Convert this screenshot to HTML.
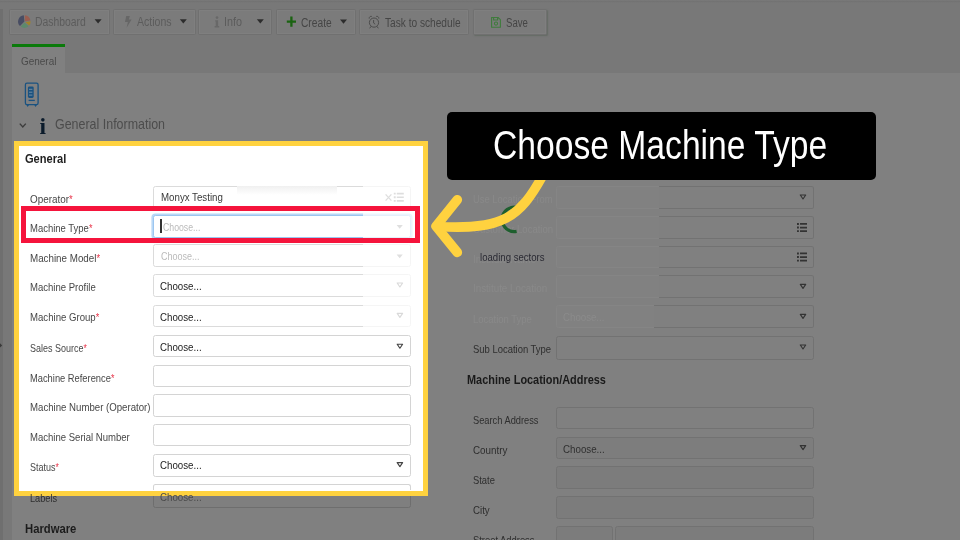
<!DOCTYPE html>
<html lang="en"><head><meta charset="utf-8"><title>Choose Machine Type</title>
<style>
html,body{margin:0;padding:0}
body{width:960px;height:540px;overflow:hidden;position:relative;background:#808080;font-family:"Liberation Sans",sans-serif}
.a{position:absolute;box-sizing:border-box}
.t{position:absolute;white-space:nowrap;transform-origin:0 50%;display:block;filter:blur(.35px)}
.btn{position:absolute;box-sizing:border-box;top:9px;height:26px;background:#7b7b7b;border:1px solid #707070;border-radius:1.5px;box-shadow:inset 0 0 0 1px #7f7f7f}
.in{position:absolute;box-sizing:border-box;left:152.6px;width:258.2px;height:22.6px;border:1px solid #dbdbdb;border-radius:2.5px;background:#fff}
.din{position:absolute;box-sizing:border-box;left:556px;width:257.8px;height:22.5px;border:1px solid #727272;border-radius:2.5px;background:#808080}
.fin{position:absolute;box-sizing:border-box;left:556px;width:257.8px;height:22.5px;border:1px solid #858585;border-radius:2.5px;background:#818181}
.fin i{position:absolute;box-sizing:border-box;left:101.5px;right:-1px;top:-1px;bottom:-1px;border:1px solid #727272;border-left:0;border-radius:0 2.5px 2.5px 0;background:#808080}
svg{position:absolute;overflow:visible}

</style></head>
<body>
<!-- page chrome (dimmed) -->
<div class="a" style="left:0;top:0;width:960px;height:73.4px;background:#787878"></div>
<div class="a" style="left:0;top:0;width:960px;height:3px;background:linear-gradient(#7e7e7e 0,#717171 35%,#787878 100%)"></div>
<div class="a" style="left:0;top:9px;width:3px;height:531px;background:#6f6f6f"></div>
<div class="a" style="left:3px;top:73px;width:9px;height:467px;background:#787878"></div>
<svg style="left:0;top:340px" width="4" height="10" viewBox="0 340 4 10"><path d="M0 343.2 l2.2 2.2 l-2.2 2.2z" fill="#3a3a3a"/></svg>
<!-- toolbar buttons -->
<div class="btn" style="left:9px;width:101px"></div>
<div class="btn" style="left:113px;width:83px"></div>
<div class="btn" style="left:198px;width:74px"></div>
<div class="btn" style="left:276px;width:80px"></div>
<div class="btn" style="left:359px;width:110px"></div>
<div class="btn" style="left:473px;width:74px;box-shadow:inset 0 0 0 1px #7f7f7f,1px 1px 1.5px #646b64"></div>
<!-- toolbar icons -->
<svg style="left:0;top:0" width="560" height="40" viewBox="0 0 560 40">
  <!-- pie -->
  <g transform="translate(24.4 21.6)">
    <path d="M0 0 L-.6 -6.3 A6.3 6.3 0 0 0 -4.4 4.5 Z" fill="#484d63"/>
    <path d="M.5 -.3 L.4 -6.3 A6.3 6.3 0 0 1 6 -1.2 Z" fill="#9a5e50"/>
    <path d="M.9 .4 L6.2 -.3 A6.3 6.3 0 0 1 4.7 4 Z" fill="#a08428"/>
    <path d="M.1 .9 L4.1 4.7 A6.3 6.3 0 0 1 -3.8 5 Z" fill="#5c8a6c"/>
  </g>
  <!-- carets -->
  <g fill="#2c2c2c">
    <path d="M94.6 19.2 h7 l-3.5 4.3z"/>
    <path d="M179.8 19.2 h7 l-3.5 4.3z"/>
    <path d="M256.8 19.2 h7 l-3.5 4.3z"/>
    <path d="M340 19.4 h7 l-3.5 4.3z"/>
  </g>
  <!-- bolt -->
  <path d="M126.2 15.9 h3.6 l-1 3.6 h2.8 l-5 8.2 l1.3 -5.6 h-2.9z" fill="#666"/>
  <!-- info i -->
  <g fill="#686868"><circle cx="217" cy="17.6" r="1.35"/><path d="M215.2 20.2 h2.9 v5.9 h1.1 v1.4 h-4.6 v-1.4 h1.1 v-4.5 h-.5z"/></g>
  <!-- plus -->
  <path d="M286.8 21.6 h9.2 M291.4 16.6 v10.2" stroke="#1a6311" stroke-width="2.3" fill="none"/>
  <!-- alarm clock -->
  <g fill="none" stroke="#4c4c4c" stroke-width="1">
    <circle cx="374" cy="22.6" r="4.6"/>
    <path d="M373.6 20 v3 l1.6 1.2 M369.2 18.6 a2 2 0 0 1 2.6 -2.2 M378.8 18.6 a2 2 0 0 0 -2.6 -2.2 M371 26.4 l-1.3 1.9 M377 26.4 l1.3 1.9"/>
  </g>
  <!-- save -->
  <g fill="none" stroke="#3f7c3c" stroke-width="1.1">
    <path d="M491.6 17.5 h6.6 l2.2 2.2 v7.6 h-8.8z"/>
    <path d="M493.6 17.6 v2.4 h4 v-2.4"/>
    <circle cx="496" cy="23.6" r="1.6"/>
  </g>
</svg>
<!-- tab -->
<div class="a" style="left:12px;top:44px;width:53px;height:30px;background:#808080;border-top:3px solid #0a7a0a"></div>
<!-- vending machine icon + chevron -->
<svg style="left:0;top:76px" width="70" height="64" viewBox="0 76 70 64">
  <g fill="none" stroke="#1a5280" stroke-width="1.3">
    <rect x="25.4" y="83.1" width="12.7" height="21.6" rx="1.6"/>
    <path d="M28.6 100.4 h6.2"/>
  </g>
  <rect x="27.9" y="86.4" width="5.8" height="11.6" rx="1.4" fill="#1a5280"/>
  <path d="M29 89.3 h3.4 M29 92.2 h3.4 M29 95.1 h3.4" stroke="#7d93a6" stroke-width=".9"/>
  <path d="M26.4 105 h2.6 l-1.3 2z M34.3 105 h2.6 l-1.3 2z" fill="#1a5280"/>
  <path d="M19.8 123.6 l3 3.4 l3 -3.4" fill="none" stroke="#3c3c3c" stroke-width="1.4"/>
</svg>

<!-- right column inputs (dimmed) -->
<div class="fin" style="top:186.1px"><i></i></div>
<div class="fin" style="top:216px"><i></i></div>
<div class="fin" style="top:245.6px"><i></i></div>
<div class="fin" style="top:275.3px"><i></i></div>
<div class="fin" style="top:305px"><i style="left:97px"></i></div>
<div class="din" style="top:336px;height:24px"></div>
<div class="din" style="top:407.4px;height:22px"></div>
<div class="din" style="top:436.7px;background:#7d7d7d"></div>
<div class="din" style="top:466.4px;background:#7c7c7c"></div>
<div class="din" style="top:496.1px;background:#7c7c7c"></div>
<div class="din" style="top:526.2px;width:57.3px;background:#7c7c7c"></div>
<div class="din" style="left:615px;top:526.2px;width:198.8px;background:#7c7c7c"></div>
<!-- right column icons -->
<svg style="left:790px;top:180px" width="30" height="290" viewBox="790 180 30 290">
  <g fill="none" stroke="#333" stroke-width="1.15" stroke-linejoin="round">
    <path d="M800.3 195 h5.4 l-2.7 4z"/>
    <path d="M800.3 284.4 h5.4 l-2.7 4z"/>
    <path d="M800.3 314.4 h5.4 l-2.7 4z"/>
    <path d="M800.3 345 h5.4 l-2.7 4z"/>
    <path d="M800.3 445.6 h5.4 l-2.7 4z"/>
  </g>
  <g fill="#333">
    <path d="M797 223 h1.9 v1.9 h-1.9z M800 223.1 h7 v1.7 h-7z M797 226.6 h1.9 v1.9 h-1.9z M800 226.7 h7 v1.7 h-7z M797 230.2 h1.9 v1.9 h-1.9z M800 230.3 h7 v1.7 h-7z"/>
    <path d="M797 252.5 h1.9 v1.9 h-1.9z M800 252.6 h7 v1.7 h-7z M797 256.1 h1.9 v1.9 h-1.9z M800 256.2 h7 v1.7 h-7z M797 259.7 h1.9 v1.9 h-1.9z M800 259.8 h7 v1.7 h-7z"/>
  </g>
</svg>
<span class="t" style="left:472.5px;top:193px;font-size:11px;line-height:12px;color:#898989;transform:scaleX(0.8565);">Use Location From</span>
<span class="t" style="left:472.5px;top:223px;font-size:11px;line-height:12px;color:#898989;transform:scaleX(0.8676);">Customer Location</span>
<span class="t" style="left:472.5px;top:253px;font-size:11px;line-height:12px;color:#898989;transform:scaleX(0.8897);">Institute Name</span>
<span class="t" style="left:472.5px;top:282px;font-size:11px;line-height:12px;color:#898989;transform:scaleX(0.8909);">Institute Location</span>
<span class="t" style="left:472.5px;top:313px;font-size:11px;line-height:12px;color:#898989;transform:scaleX(0.8624);">Location Type</span>
<span class="t" style="left:562.8px;top:311px;font-size:11.5px;line-height:12px;color:#8b8b8b;transform:scaleX(0.8419);">Choose...</span>
<span class="t" style="left:479.5px;top:251px;font-size:11px;line-height:12px;color:#2a2a33;transform:scaleX(0.8730);">loading sectors</span>
<!-- loading spinner -->
<svg style="left:490px;top:200px" width="40" height="40" viewBox="490 200 40 40">
  <path d="M517.4 207.6 A12.2 12.2 0 1 0 516.6 231.4" fill="none" stroke="#1e5f2e" stroke-width="3.2"/>
</svg>

<!-- labels row under the highlight -->
<div class="din" style="left:152.6px;top:483.5px;width:258.2px;height:24px;border-color:#6e6e6e;background:#7f7f7f"></div>

<!-- yellow highlighted panel -->
<div class="a" style="left:14px;top:140.5px;width:414px;height:355px;background:#fff;border:5.5px solid #ffd23f"></div>
<!-- left inputs -->
<div class="in" style="top:186.3px;height:24px"></div>
<div class="in" style="top:214.6px;height:23.2px;border-color:#9cc6f0;box-shadow:0 0 0 1.6px #b9d8f6"></div>
<div class="in" style="top:244.2px"></div>
<div class="in" style="top:274.4px"></div>
<div class="in" style="top:304.5px"></div>
<div class="in" style="top:334.9px;border-color:#d4d4d4"></div>
<div class="in" style="top:364.6px;border-color:#d4d4d4"></div>
<div class="in" style="top:394.3px;border-color:#d4d4d4"></div>
<div class="in" style="top:423.8px;border-color:#d4d4d4"></div>
<div class="in" style="top:453.5px;height:23.2px;border-color:#d4d4d4"></div>
<div class="in" style="top:483.5px;height:6px;border-bottom:0;border-radius:2.5px 2.5px 0 0;border-color:#d4d4d4"></div>
<div class="a" style="left:236.7px;top:186px;width:100px;height:8.5px;background:linear-gradient(#f0f0f0,#fff)"></div>
<!-- left input icons -->
<svg style="left:380px;top:185px" width="35" height="300" viewBox="380 185 35 300">
  <path d="M385.6 194.4 l5.8 6.2 M391.4 194.4 l-5.8 6.2" stroke="#8a8a8a" stroke-width="1.3" fill="none"/>
  <path d="M393.8 192.7 h1.9 v1.9 h-1.9z M396.8 192.8 h7 v1.7 h-7z M393.8 196.3 h1.9 v1.9 h-1.9z M396.8 196.4 h7 v1.7 h-7z M393.8 199.9 h1.9 v1.9 h-1.9z M396.8 200 h7 v1.7 h-7z" fill="#8a8a8a"/>
  <path d="M396.6 225 h6.2 l-3.1 3.8z M396.6 254.4 h6.2 l-3.1 3.8z" fill="#8c8c8c"/>
  <g fill="none" stroke-width="1.15" stroke-linejoin="round">
    <path d="M397.2 283 h5.4 l-2.7 4z M397.2 313.4 h5.4 l-2.7 4z" stroke="#777"/>
    <path d="M397.2 344.2 h5.4 l-2.7 4z M397.2 462.6 h5.4 l-2.7 4z" stroke="#444"/>
  </g>
</svg>
<!-- white veil on right part of first five inputs -->
<div class="a" style="left:363.4px;top:182px;width:52px;height:148px;background:rgba(255,255,255,.72)"></div>
<!-- text cursor -->
<div class="a" style="left:160.3px;top:219px;width:1.3px;height:14.4px;background:#333"></div>
<!-- red highlight -->
<div class="a" style="left:21px;top:205.8px;width:399.3px;height:37.4px;border:5.2px solid #f5143c"></div>

<!-- callout -->
<svg style="left:0;top:0" width="960" height="540" viewBox="0 0 960 540">
  <g fill="none" stroke="#ffd23f" stroke-width="9.6" stroke-linecap="round" stroke-linejoin="round">
    <path d="M542.5 176 C 519.9 216.8, 503.4 230.3, 438 226.5"/>
    <path d="M457.3 199.8 L 436 226.3 L 457.3 252.4"/>
  </g>
</svg>
<div class="a" style="left:446.7px;top:111.5px;width:429.3px;height:68.5px;background:#000;border-radius:5px"></div>
<!-- serif info glyph for section heading -->
<span class="t" style="left:39.4px;top:113px;font-family:'Liberation Serif',serif;font-weight:bold;font-size:23.5px;line-height:26px;color:#0b1b2b;transform:scaleX(1)">i</span>
<span class="t" style="left:34.8px;top:15px;font-size:12.5px;line-height:14px;color:#5c5c5c;transform:scaleX(0.8298);">Dashboard</span>
<span class="t" style="left:136.6px;top:15px;font-size:12.5px;line-height:14px;color:#5c5c5c;transform:scaleX(0.8451);">Actions</span>
<span class="t" style="left:224.2px;top:15px;font-size:12.5px;line-height:14px;color:#5c5c5c;transform:scaleX(0.8653);">Info</span>
<span class="t" style="left:300.8px;top:16px;font-size:12.5px;line-height:14px;color:#454545;transform:scaleX(0.8167);">Create</span>
<span class="t" style="left:385.2px;top:16px;font-size:12.5px;line-height:14px;color:#454545;transform:scaleX(0.8114);">Task to schedule</span>
<span class="t" style="left:506px;top:16px;font-size:12.5px;line-height:14px;color:#454545;transform:scaleX(0.7667);">Save</span>
<span class="t" style="left:20.5px;top:55px;font-size:11.5px;line-height:12px;color:#4a4a4a;transform:scaleX(0.8663);">General</span>
<span class="t" style="left:55px;top:116px;font-size:14.5px;line-height:16px;color:#4c4c4c;transform:scaleX(0.8587);">General Information</span>
<span class="t" style="left:25px;top:151px;font-size:13px;line-height:15px;color:#222;transform:scaleX(0.8529);font-weight:bold;">General</span>
<span class="t" style="left:30.2px;top:193px;font-size:11px;line-height:12px;color:#474747;transform:scaleX(0.9005);">Operator<span style="color:#e8354a;font-size:.95em;position:relative;top:0">*</span></span>
<span class="t" style="left:30.2px;top:222px;font-size:11px;line-height:12px;color:#474747;transform:scaleX(0.8624);">Machine Type<span style="color:#e8354a;font-size:.95em;position:relative;top:0">*</span></span>
<span class="t" style="left:30.2px;top:252px;font-size:11px;line-height:12px;color:#474747;transform:scaleX(0.8902);">Machine Model<span style="color:#e8354a;font-size:.95em;position:relative;top:0">*</span></span>
<span class="t" style="left:30.2px;top:281px;font-size:11px;line-height:12px;color:#474747;transform:scaleX(0.8678);">Machine Profile</span>
<span class="t" style="left:30.2px;top:311px;font-size:11px;line-height:12px;color:#474747;transform:scaleX(0.8735);">Machine Group<span style="color:#e8354a;font-size:.95em;position:relative;top:0">*</span></span>
<span class="t" style="left:30.2px;top:342px;font-size:11px;line-height:12px;color:#474747;transform:scaleX(0.8176);">Sales Source<span style="color:#e8354a;font-size:.95em;position:relative;top:0">*</span></span>
<span class="t" style="left:30.2px;top:372px;font-size:11px;line-height:12px;color:#474747;transform:scaleX(0.8481);">Machine Reference<span style="color:#e8354a;font-size:.95em;position:relative;top:0">*</span></span>
<span class="t" style="left:30.2px;top:401px;font-size:11px;line-height:12px;color:#474747;transform:scaleX(0.8760);">Machine Number (Operator)</span>
<span class="t" style="left:30.2px;top:431px;font-size:11px;line-height:12px;color:#474747;transform:scaleX(0.8674);">Machine Serial Number</span>
<span class="t" style="left:30.2px;top:461px;font-size:11px;line-height:12px;color:#474747;transform:scaleX(0.8176);">Status<span style="color:#e8354a;font-size:.95em;position:relative;top:0">*</span></span>
<span class="t" style="left:30.2px;top:492px;font-size:11px;line-height:12px;color:#2e2e2e;transform:scaleX(0.8359);">Labels</span>
<span class="t" style="left:24.8px;top:521px;font-size:13px;line-height:15px;color:#1c1c1c;transform:scaleX(0.8658);font-weight:bold;">Hardware</span>
<span class="t" style="left:161.3px;top:191px;font-size:11.5px;line-height:12px;color:#3a3a3a;transform:scaleX(0.8438);">Monyx Testing</span>
<span class="t" style="left:162.5px;top:221px;font-size:11.5px;line-height:12px;color:#bbb;transform:scaleX(0.7586);">Choose...</span>
<span class="t" style="left:161.3px;top:250px;font-size:11.5px;line-height:12px;color:#bbb;transform:scaleX(0.7830);">Choose...</span>
<span class="t" style="left:159.5px;top:280px;font-size:11.5px;line-height:12px;color:#222;transform:scaleX(0.8460);">Choose...</span>
<span class="t" style="left:159.5px;top:311px;font-size:11.5px;line-height:12px;color:#222;transform:scaleX(0.8460);">Choose...</span>
<span class="t" style="left:159.5px;top:341px;font-size:11.5px;line-height:12px;color:#222;transform:scaleX(0.8460);">Choose...</span>
<span class="t" style="left:159.5px;top:459px;font-size:11.5px;line-height:12px;color:#222;transform:scaleX(0.8460);">Choose...</span>
<span class="t" style="left:159.5px;top:491px;font-size:11.5px;line-height:12px;color:#4a4a4a;transform:scaleX(0.8460);">Choose...</span>
<span class="t" style="left:472.5px;top:343px;font-size:11px;line-height:12px;color:#2e2e2e;transform:scaleX(0.8590);">Sub Location Type</span>
<span class="t" style="left:467.3px;top:372px;font-size:13px;line-height:15px;color:#1a1a1a;transform:scaleX(0.8397);font-weight:bold;">Machine Location/Address</span>
<span class="t" style="left:472.5px;top:414px;font-size:11px;line-height:12px;color:#2e2e2e;transform:scaleX(0.8435);">Search Address</span>
<span class="t" style="left:472.5px;top:444px;font-size:11px;line-height:12px;color:#2e2e2e;transform:scaleX(0.8928);">Country</span>
<span class="t" style="left:562.7px;top:443px;font-size:11.5px;line-height:12px;color:#303030;transform:scaleX(0.8480);">Choose...</span>
<span class="t" style="left:472.5px;top:474px;font-size:11px;line-height:12px;color:#2e2e2e;transform:scaleX(0.8526);">State</span>
<span class="t" style="left:472.5px;top:504px;font-size:11px;line-height:12px;color:#2e2e2e;transform:scaleX(0.8811);">City</span>
<span class="t" style="left:472.5px;top:534px;font-size:11px;line-height:12px;color:#2e2e2e;transform:scaleX(0.8523);">Street Address</span>
<span class="t" style="left:493.4px;top:123px;font-size:40px;line-height:44px;color:#fff;transform:scaleX(0.8412);">Choose Machine Type</span>

</body></html>
